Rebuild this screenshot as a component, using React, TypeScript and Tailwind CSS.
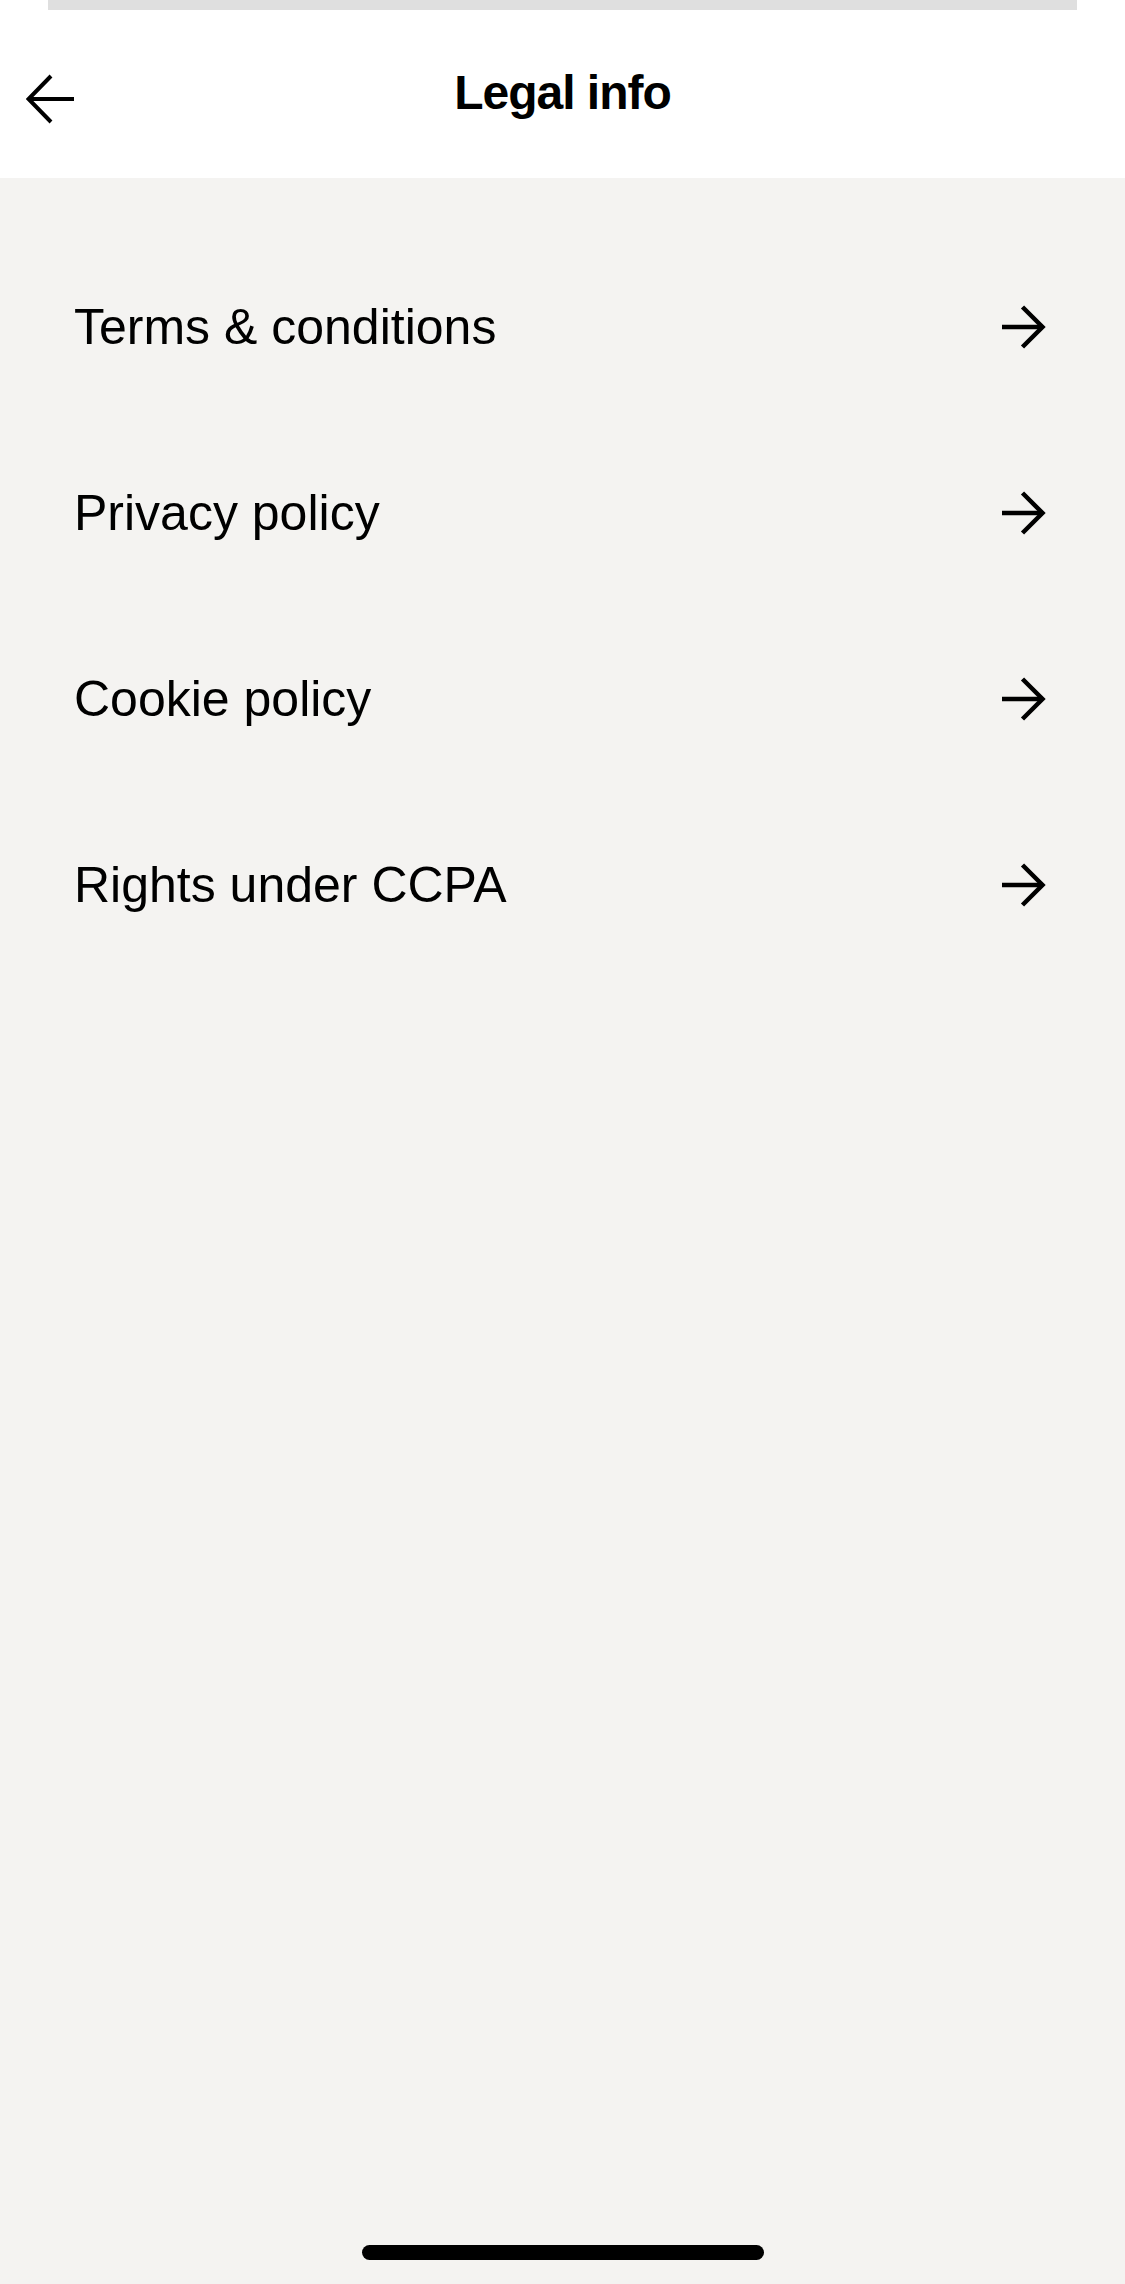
import React from "react";

const items = ["Terms & conditions", "Privacy policy", "Cookie policy", "Rights under CCPA"];

function ArrowRight() {
  return (
    <svg width="46" height="46" viewBox="0 0 46 46" fill="none" stroke="#000" strokeWidth="4.5" strokeLinecap="butt" strokeLinejoin="miter">
      <path d="M2 23 H43" />
      <path d="M22.5 3 L42.5 23 L22.5 43" />
    </svg>
  );
}

function ArrowLeft() {
  return (
    <svg width="50" height="50" viewBox="0 0 50 50" fill="none" stroke="#000" strokeWidth="4" strokeLinecap="butt" strokeLinejoin="miter">
      <path d="M3 25 H48" />
      <path d="M25 2 L2.5 25 L25 48" />
    </svg>
  );
}

export default function App() {
  return (
    <div
      className="flex h-[2284px] w-full flex-col bg-[#f4f3f1] text-black"
      style={{ fontFamily: '"Liberation Sans", Arial, sans-serif' }}
    >
      <header className="flex h-[178px] flex-col bg-white">
        <div className="mx-[48px] h-[10px] bg-[#dfdfdf]" />
        <div className="grid flex-1 grid-cols-[1fr_auto_1fr] items-start">
          <div className="mt-[64px] pl-[26px]">
            <ArrowLeft />
          </div>
          <h1 className="mt-[55px] text-[48px] font-bold leading-[56px] tracking-[-1px]">Legal info</h1>
          <div />
        </div>
      </header>
      <main className="flex flex-col pt-[56px]">
        {items.map((label) => (
          <div key={label} className="flex h-[186px] items-center justify-between pl-[74px] pr-[79px]">
            <span className="text-[50px] leading-[58px]">{label}</span>
            <ArrowRight />
          </div>
        ))}
      </main>
      <div className="flex-1" />
      <div className="mx-auto mb-[24px] h-[15px] w-[402px] rounded-full bg-black" />
    </div>
  );
}
